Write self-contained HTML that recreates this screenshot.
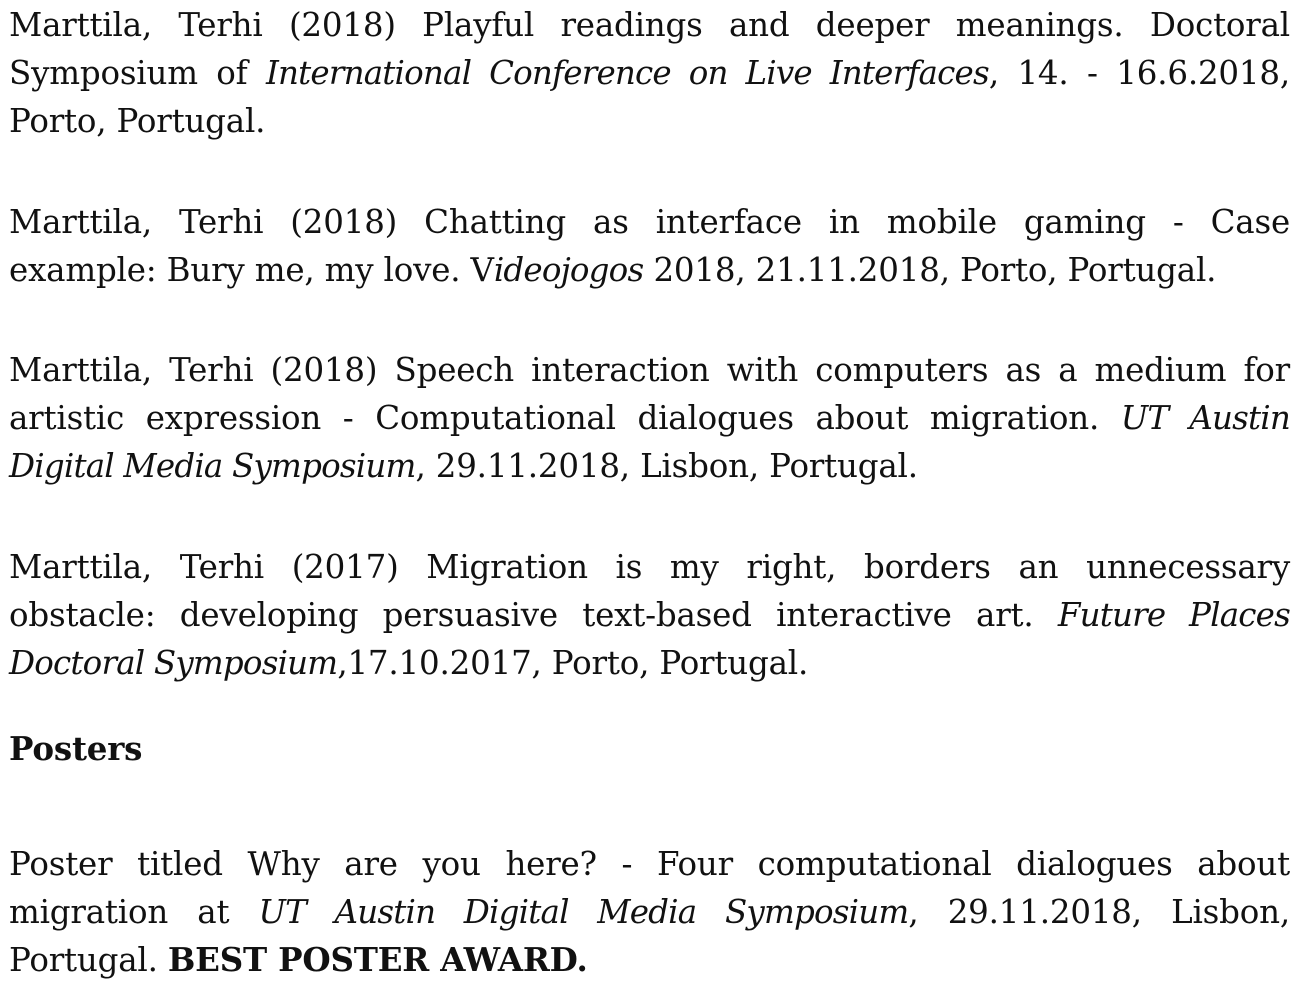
<!DOCTYPE html>
<html><head><meta charset="utf-8"><style>
html,body{margin:0;padding:0;background:#fff;width:1310px;height:992px;overflow:hidden}
body{font-family:"DejaVu Serif","Liberation Serif",serif;font-size:32.5px;color:#111;}
.w{position:absolute;left:9px;width:1281px}
.l{height:48px;line-height:48px;text-align:justify;text-align-last:justify;white-space:normal;letter-spacing:-0.2px}
.e{text-align:left;text-align-last:left}
i{font-style:italic;letter-spacing:-0.8px}
</style></head><body>
<div class="w" style="top:1px">
<div class="l">Marttila, Terhi (2018) Playful readings and deeper meanings. Doctoral</div>
<div class="l">Symposium of <i>International Conference on Live Interfaces</i>, 14. - 16.6.2018,</div>
<div class="l e">Porto, Portugal.</div>
</div>
<div class="w" style="top:198px">
<div class="l">Marttila, Terhi (2018) Chatting as interface in mobile gaming - Case</div>
<div class="l e">example: Bury me, my love. V<i>ideojogos</i> 2018, 21.11.2018, Porto, Portugal.</div>
</div>
<div class="w" style="top:346px">
<div class="l">Marttila, Terhi (2018) Speech interaction with computers as a medium for</div>
<div class="l">artistic expression - Computational dialogues about migration. <i>UT Austin</i></div>
<div class="l e"><i>Digital Media Symposium</i>, 29.11.2018, Lisbon, Portugal.</div>
</div>
<div class="w" style="top:543px">
<div class="l">Marttila, Terhi (2017) Migration is my right, borders an unnecessary</div>
<div class="l">obstacle: developing persuasive text-based interactive art. <i>Future Places</i></div>
<div class="l e"><i>Doctoral Symposium</i>,17.10.2017, Porto, Portugal.</div>
</div>
<div class="w" style="top:725px">
<div class="l e"><b>Posters</b></div>
</div>
<div class="w" style="top:840px">
<div class="l">Poster titled Why are you here? - Four computational dialogues about</div>
<div class="l">migration at <i>UT Austin Digital Media Symposium</i>, 29.11.2018, Lisbon,</div>
<div class="l e">Portugal. <b>BEST POSTER AWARD.</b></div>
</div>
</body></html>
